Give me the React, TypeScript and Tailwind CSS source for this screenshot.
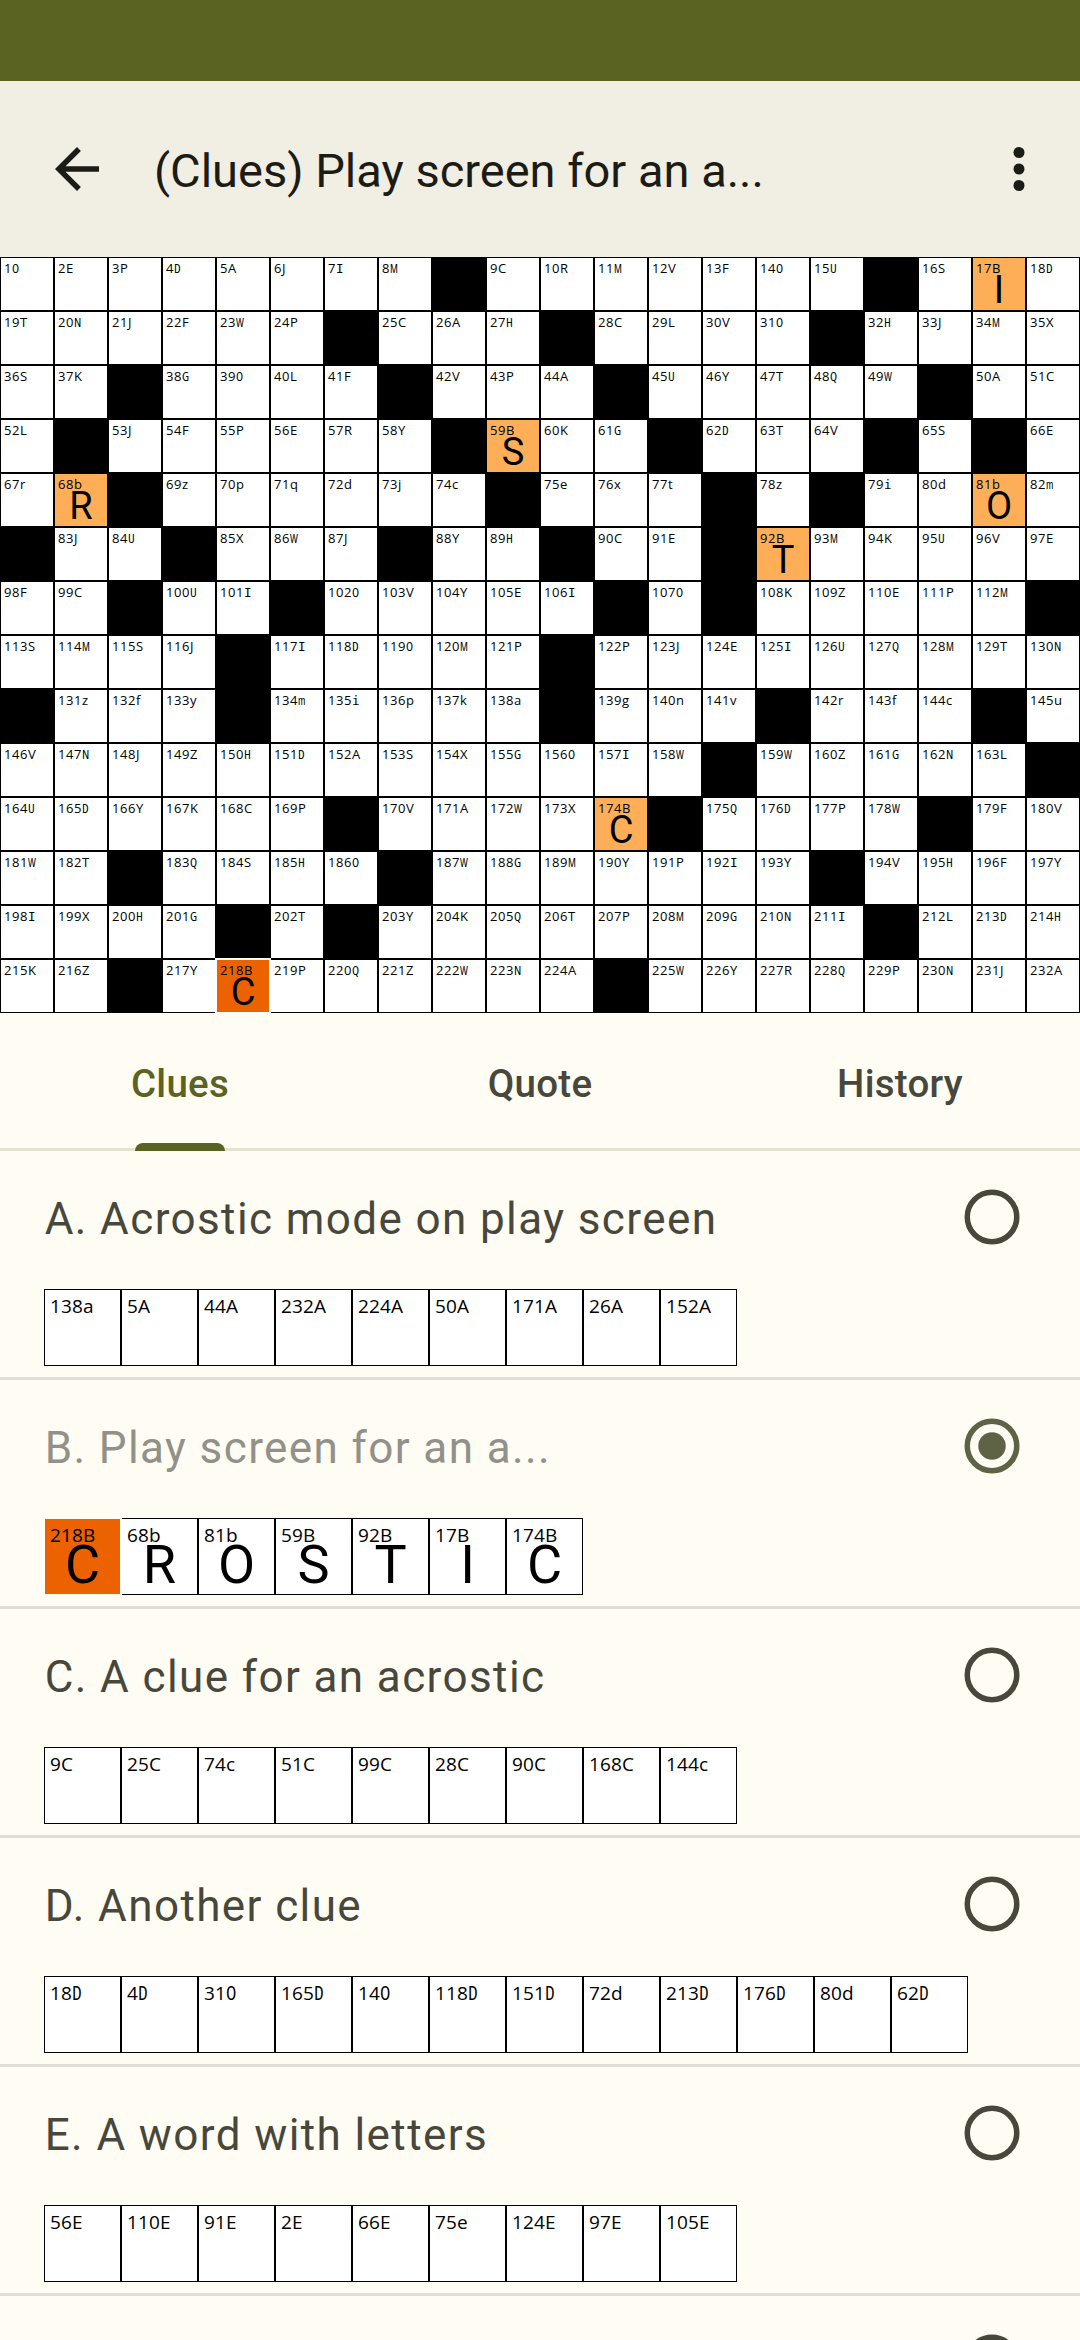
import React from "react";

const QUOTE_ROWS = [
  "OEPDAJIM#CRMVFOU#SBD",
  "TNJFWP#CAH#CLVO#HJMX",
  "SK#GOLF#VPA#UYTQW#AC",
  "L#JFPERY#BKG#DTV#S#E",
  "rb#zpqdjc#ext#z#idbm",
  "#JU#XWJ#YH#CE#BMKUVE",
  "FC#UI#OVYEI#O#KZEPM#",
  "SMSJ#IDOMP#PJEIUQMTN",
  "#zfy#mipka#gnv#rfc#u",
  "VNJZHDASXGOIW#WZGNL#",
  "UDYKCP#VAWXB#QDPW#FV",
  "WT#QSHO#WGMYPIY#VHFY",
  "IXHG#T#YKQTPMGNI#LDH",
  "KZ#YBPQZWNA#WYRQPNJA",
];

const ENTRIES: Record<number, string> = {
  218: "C",
  68: "R",
  81: "O",
  59: "S",
  92: "T",
  17: "I",
  174: "C",
};

const ACTIVE = 218;

type QuoteCell = { number: number; letter: string } | null;

const QUOTE_CELLS: QuoteCell[] = (() => {
  let n = 0;
  return QUOTE_ROWS.join("")
    .split("")
    .map((letter) => (letter === "#" ? null : { number: ++n, letter }));
})();

const CLUES = [
  { label: "A. Acrostic mode on play screen", cells: "138a 5A 44A 232A 224A 50A 171A 26A 152A" },
  { label: "B. Play screen for an a...", cells: "218B 68b 81b 59B 92B 17B 174B", selected: true },
  { label: "C. A clue for an acrostic", cells: "9C 25C 74c 51C 99C 28C 90C 168C 144c" },
  { label: "D. Another clue", cells: "18D 4D 31O 165D 14O 118D 151D 72d 213D 176D 80d 62D" },
  { label: "E. A word with letters", cells: "56E 110E 91E 2E 66E 75e 124E 97E 105E" },
];

function letterStyle(letter: string) {
  if ("MWm".includes(letter)) return "inline-block origin-left scale-x-[0.85] [font-stretch:75%]";
  if ("DNHUGOQ".includes(letter)) return "[font-stretch:82%]";
  if ("AC".includes(letter)) return "[font-stretch:92%]";
  if ("Ii".includes(letter)) return "font-['DejaVu_Sans_Mono',monospace] text-[0.96em] leading-[0]";
  return "";
}

function QuoteSquare({ cell }: { cell: QuoteCell }) {
  if (!cell) return <div className="h-[54px] bg-black" />;
  const active = cell.number === ACTIVE;
  const entry = ENTRIES[cell.number];
  const look = active
    ? "z-10 border-white bg-[#ec6200] shadow-[0_0_0_1px_white]"
    : entry
      ? "border-black bg-[#ffae58]"
      : "border-black bg-white";
  return (
    <div className={`relative h-[54px] border pt-[3px] pl-[3px] text-black ${look}`}>
      <div className="font-['Open_Sans',sans-serif] text-[13px] leading-[14px] tracking-[0.57px] whitespace-nowrap">
        {cell.number}
        <span className={letterStyle(cell.letter)}>{cell.letter}</span>
      </div>
      {entry && (
        <div className="absolute inset-x-0 top-[13px] text-center text-[38px] leading-[38px]">{entry}</div>
      )}
    </div>
  );
}

function ClueSquare({ id }: { id: string }) {
  const number = Number(id.slice(0, -1));
  const letter = id.slice(-1);
  const active = number === ACTIVE;
  const entry = ENTRIES[number];
  const look = active ? "z-10 border-[#fffcf4] bg-[#ec6200] shadow-[0_0_0_1px_white]" : "border-black bg-white";
  return (
    <div className={`relative h-[77px] w-[77px] shrink-0 border pt-[6px] pl-[5px] text-black ${look}`}>
      <div className="font-['Open_Sans',sans-serif] text-[19px] leading-[20px] tracking-[0.13px] whitespace-nowrap">
        {number}
        <span className={letterStyle(letter)}>{letter}</span>
      </div>
      {entry && (
        <div className="absolute inset-x-0 top-[19px] text-center text-[54px] leading-[54px]">{entry}</div>
      )}
    </div>
  );
}

function Radio({ checked }: { checked?: boolean }) {
  const color = checked ? "#5d6344" : "#47483b";
  return (
    <svg className="block h-[56px] w-[56px] shrink-0" viewBox="0 0 56 56" fill="none">
      <circle cx="28" cy="28" r="24.75" stroke={color} strokeWidth="5.5" />
      {checked && <circle cx="28" cy="28" r="13.75" fill={color} />}
    </svg>
  );
}

export default function App() {
  return (
    <div className="flex h-[2340px] w-[1080px] flex-col overflow-hidden bg-[#fffcf4] font-['Roboto',sans-serif]">
      <div className="h-[81px] shrink-0 bg-[#5a6321]" />
      <header className="flex h-[176px] shrink-0 items-center bg-[#f1efe3] pr-[28px] pl-[44px] text-[#1c1c17]">
        <svg className="h-[66px] w-[66px]" viewBox="0 0 24 24" fill="currentColor">
          <path d="M20 11H7.83l5.59-5.59L12 4l-8 8 8 8 1.41-1.41L7.83 13H20v-2z" />
        </svg>
        <h1 className="mt-1 ml-11 flex-1 text-[47px] leading-[56px]">(Clues) Play screen for an a...</h1>
        <svg className="h-[66px] w-[66px]" viewBox="0 0 24 24" fill="currentColor">
          <circle cx="12" cy="6" r="2" />
          <circle cx="12" cy="12" r="2" />
          <circle cx="12" cy="18" r="2" />
        </svg>
      </header>

      <div className="grid shrink-0 grid-cols-20 overflow-hidden">
        {QUOTE_CELLS.map((cell, i) => (
          <QuoteSquare key={i} cell={cell} />
        ))}
      </div>

      <nav className="relative grid h-[138px] shrink-0 grid-cols-3 border-b-[3px] border-[#e4e3d2] pt-[41px] text-center text-[38.5px] leading-[60px] font-medium tracking-[0.275px] text-[#47483b]">
        <div className="text-[#5a6321]">Clues</div>
        <div>Quote</div>
        <div>History</div>
        <div className="absolute -bottom-[3px] left-[135px] h-2 w-[90px] rounded-t-lg bg-[#5a6321]" />
      </nav>

      {CLUES.map((clue) => (
        <section key={clue.label} className="h-[229px] shrink-0 border-b-[3px] border-[#e0ddd6] pl-11">
          <div className="flex h-[138px] items-start justify-between pr-[60px]">
            <div
              className={`pt-[38px] pl-[0.7px] text-[44px] leading-[60px] tracking-[1.4px] ${
                clue.selected ? "text-[#91918a]" : "text-[#47483b]"
              }`}
            >
              {clue.label}
            </div>
            <div className="pt-[38px]">
              <Radio checked={clue.selected} />
            </div>
          </div>
          <div className="flex w-fit overflow-hidden">
            {clue.cells.split(" ").map((id) => (
              <ClueSquare key={id} id={id} />
            ))}
          </div>
        </section>
      ))}
      <section className="flex h-[229px] shrink-0 justify-end pt-[38px] pr-[60px]">
        <Radio />
      </section>
    </div>
  );
}
